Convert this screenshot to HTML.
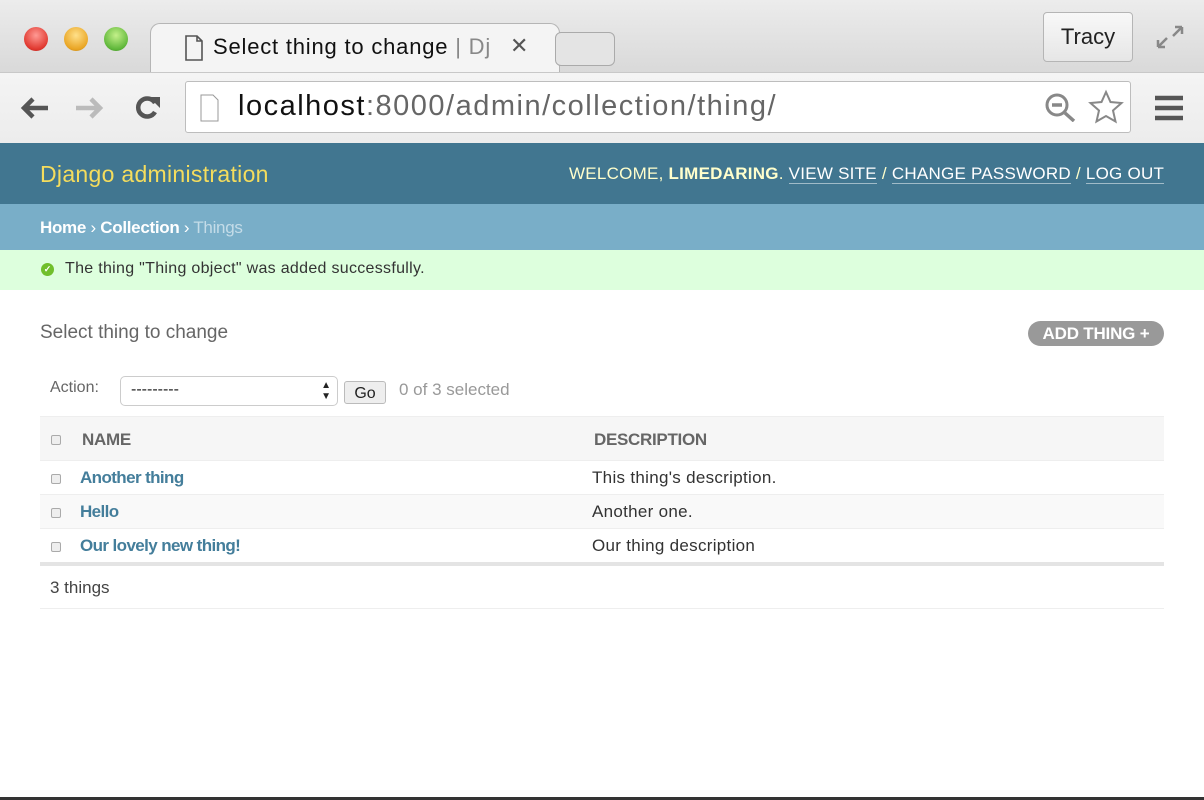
<!DOCTYPE html>
<html><head><style>
*{margin:0;padding:0;box-sizing:border-box}
body{width:1204px;height:800px;overflow:hidden;font-family:"Liberation Sans",sans-serif;background:#fff;position:relative}
.abs{position:absolute}
.top{left:0;top:0;width:1204px;height:72px;background:linear-gradient(#ececec,#d9d9d9)}
.tool{left:0;top:72px;width:1204px;height:71px;background:linear-gradient(#f4f4f4,#ececec);border-top:1px solid #c8c8c8}
.dot{width:24px;height:24px;border-radius:50%;top:27px}
.tab{left:150px;top:23px;width:410px;height:50px;background:#f4f4f4;border:1px solid #b5b5b5;border-bottom:none;border-radius:10px 10px 0 0}
.url{left:185px;top:81px;width:946px;height:52px;background:#fff;border:1px solid #bdbdbd;border-radius:3px}
.hdr{left:0;top:143px;width:1204px;height:61px;background:#417690}
.bc{left:0;top:204px;width:1204px;height:46px;background:#79aec8;color:#fff;font-size:17px;padding:14px 40px;letter-spacing:-0.3px}
.msg{left:0;top:250px;width:1204px;height:40px;background:#dfd;font-size:16px;color:#333;padding:10px 65px;letter-spacing:0.3px}
.lk{font-size:17px;font-weight:bold;color:#447e9b;letter-spacing:-0.6px}
</style></head><body>
<div class="abs top"></div>
<div class="abs dot" style="left:24px;background:radial-gradient(circle at 50% 35%,#ff9a94,#e0382f 70%,#a51d18)"></div>
<div class="abs dot" style="left:64px;background:radial-gradient(circle at 50% 35%,#ffe08a,#e9a524 70%,#b07512)"></div>
<div class="abs dot" style="left:104px;background:radial-gradient(circle at 50% 35%,#c4f08a,#5fb73a 70%,#35821f)"></div>
<div class="abs tab"></div>
<div class="abs" style="left:555px;top:32px;width:60px;height:34px;border:1px solid #aaa;border-radius:6px;background:#e4e4e4"></div>
<svg class="abs" style="left:184px;top:35px" width="20" height="26"><path d="M2 1h11l5 5v19H2z M13 1v5h5" fill="none" stroke="#555" stroke-width="1.6"/></svg>
<div class="abs" style="left:213px;top:34px;font-size:22px;color:#111;letter-spacing:0.8px">Select thing to change <span style="color:#888">| Dj</span></div>
<div class="abs" style="left:510px;top:33px;font-size:22px;color:#555">✕</div>
<div class="abs" style="left:1043px;top:12px;width:90px;height:50px;border:1px solid #b5b5b5;border-radius:4px;background:linear-gradient(#f8f8f8,#e6e6e6);font-size:22px;text-align:center;line-height:48px;color:#222">Tracy</div>
<svg class="abs" style="left:1155px;top:24px" width="30" height="26"><path d="M3 23l9-9M3 23v-7M3 23h7M27 3l-9 9M27 3v7M27 3h-7" stroke="#888" stroke-width="2.5" fill="none"/></svg>
<div class="abs tool"></div>
<svg class="abs" style="left:18px;top:94px" width="36" height="28"><path d="M30 14H6M15 5l-9 9 9 9" stroke="#555" stroke-width="4.5" fill="none"/></svg>
<svg class="abs" style="left:72px;top:94px" width="36" height="28"><path d="M4 14h24M19 5l9 9-9 9" stroke="#bbb" stroke-width="4.5" fill="none"/></svg>
<svg class="abs" style="left:133px;top:93px" width="30" height="30"><path d="M22 19a9 9 0 1 1 0-9" stroke="#555" stroke-width="4.5" fill="none"/><path d="M16 4h11v11z" fill="#555"/></svg>
<div class="abs url"></div>
<svg class="abs" style="left:200px;top:94px" width="20" height="28"><path d="M1 1h12l5 5v21H1z" fill="#fff" stroke="#999"/></svg>
<div class="abs" style="left:238px;top:90px;font-size:29px;color:#111;letter-spacing:1.5px">localhost<span style="color:#666">:8000/admin/collection/thing/</span></div>
<svg class="abs" style="left:1044px;top:92px" width="34" height="30"><circle cx="13" cy="13" r="10" stroke="#888" stroke-width="3" fill="none"/><path d="M8 13h10M21 21l9 8" stroke="#888" stroke-width="3.5"/></svg>
<svg class="abs" style="left:1088px;top:89px" width="36" height="36"><path d="M18 3l4.5 10 11 1-8.5 7.5 2.5 11L18 27l-9.5 5.5 2.5-11L2.5 14l11-1z" fill="none" stroke="#888" stroke-width="2"/></svg>
<svg class="abs" style="left:1153px;top:95px" width="32" height="26"><path d="M2 3h28M2 13h28M2 23h28" stroke="#555" stroke-width="4.5"/></svg>
<div class="abs hdr"></div>
<div class="abs" style="left:40px;top:161px;font-size:23px;color:#f5dd5d;letter-spacing:0.3px">Django administration</div>
<div class="abs" style="left:569px;top:164px;font-size:17px;color:#ffc;letter-spacing:0.25px">WELCOME, <b>LIMEDARING</b>. <span style="color:#fff;border-bottom:1px solid rgba(255,255,255,.5)">VIEW SITE</span> / <span style="color:#fff;border-bottom:1px solid rgba(255,255,255,.5)">CHANGE PASSWORD</span> / <span style="color:#fff;border-bottom:1px solid rgba(255,255,255,.5)">LOG OUT</span></div>
<div class="abs bc"><b>Home</b> › <b>Collection</b> › <span style="color:#c4dce8">Things</span></div>
<div class="abs msg">The thing "Thing object" was added successfully.</div>
<div class="abs" style="left:41px;top:263px;width:13px;height:13px;border-radius:50%;background:#70bf2b;color:#fff;font-size:9px;text-align:center;line-height:13px;font-weight:bold">✓</div>
<div class="abs" style="left:40px;top:322px;font-size:19px;color:#666">Select thing to change</div>
<div class="abs" style="left:1028px;top:321px;width:136px;height:25px;border-radius:13px;background:#999;color:#fff;font-size:17px;font-weight:bold;text-align:center;line-height:25px;letter-spacing:-0.2px">ADD THING +</div>
<div class="abs" style="left:50px;top:379px;font-size:16px;color:#666">Action:</div>
<div class="abs" style="left:120px;top:376px;width:218px;height:30px;border:1px solid #ccc;border-radius:5px;font-size:16px;padding:4px 10px;color:#222">---------<span style="position:absolute;right:6px;top:3px;font-size:10px;line-height:11px">▲<br>▼</span></div>
<div class="abs" style="left:344px;top:381px;width:42px;height:23px;border:1px solid #bbb;border-radius:3px;background:#eee;font-size:16px;text-align:center;line-height:24px;color:#222">Go</div>
<div class="abs" style="left:399px;top:380px;font-size:17px;color:#999">0 of 3 selected</div>
<div class="abs" style="left:40px;top:416px;width:1124px;height:45px;background:#f6f6f6;border-top:1px solid #eee;border-bottom:1px solid #eee"></div>
<div class="abs" style="left:82px;top:430px;font-size:17px;font-weight:bold;color:#666;letter-spacing:-0.3px">NAME</div>
<div class="abs" style="left:594px;top:430px;font-size:17px;font-weight:bold;color:#666;letter-spacing:-0.3px">DESCRIPTION</div>
<div class="abs" style="left:40px;top:494px;width:1124px;height:35px;background:#f9f9f9;border-top:1px solid #eee;border-bottom:1px solid #eee"></div>
<div class="abs" style="left:40px;top:562px;width:1124px;height:4px;background:#e4e4e4"></div>
<div class="abs" style="left:40px;top:608px;width:1124px;height:1px;background:#eee"></div>
<div class="abs lk" style="left:80px;top:468px">Another thing</div>
<div class="abs lk" style="left:80px;top:502px">Hello</div>
<div class="abs lk" style="left:80px;top:536px">Our lovely new thing!</div>
<div class="abs" style="left:592px;top:468px;font-size:17px;color:#333;letter-spacing:0.3px">This thing's description.</div>
<div class="abs" style="left:592px;top:502px;font-size:17px;color:#333;letter-spacing:0.3px">Another one.</div>
<div class="abs" style="left:592px;top:536px;font-size:17px;color:#333;letter-spacing:0.3px">Our thing description</div>
<div class="abs" style="left:51px;top:435px;width:10px;height:10px;border:1px solid #aaa;border-radius:2px;background:#eee"></div>
<div class="abs" style="left:51px;top:474px;width:10px;height:10px;border:1px solid #aaa;border-radius:2px;background:#eee"></div>
<div class="abs" style="left:51px;top:508px;width:10px;height:10px;border:1px solid #aaa;border-radius:2px;background:#eee"></div>
<div class="abs" style="left:51px;top:542px;width:10px;height:10px;border:1px solid #aaa;border-radius:2px;background:#eee"></div>
<div class="abs" style="left:50px;top:578px;font-size:17px;color:#444">3 things</div>
<div class="abs" style="left:0;top:797px;width:1204px;height:3px;background:#333"></div>
</body></html>
